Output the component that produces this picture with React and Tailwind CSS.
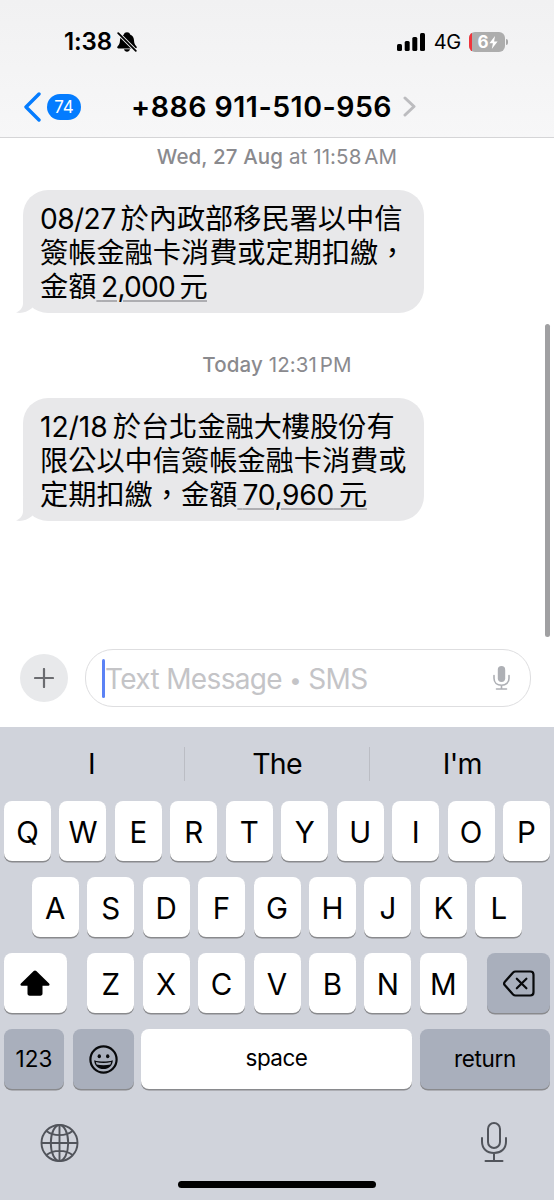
import clsx from 'clsx'

const ROW_ONE = ['Q', 'W', 'E', 'R', 'T', 'Y', 'U', 'I', 'O', 'P']
const ROW_TWO = ['A', 'S', 'D', 'F', 'G', 'H', 'J', 'K', 'L']
const ROW_THREE = ['Z', 'X', 'C', 'V', 'B', 'N', 'M']

const BellOff = () => (
    <svg width="20" height="20" viewBox="0 0 20 20" className="ml-[5px]">
        <path d="M10 0.2c-1.600 0-2.800.9-3.100 2.200C4.300 3.500 3.100 5.500 3 8.200 2.900 11.500 2.100 12.600.9 13.900c-.5.500-.7.900-.7 1.400 0 .7.500 1.100 1.200 1.100h17.200c.7 0 1.200-.4 1.200-1.100 0-.5-.2-.9-.7-1.400-1.200-1.300-2-2.400-2.100-5.700-.1-2.700-1.300-4.700-3.900-5.800C12.800 1.100 11.600.2 10 .2z" fill="#000" />
        <path d="M7 17.200h6c-.3 1.500-1.500 2.500-3 2.500s-2.700-1-3-2.500z" fill="#000" />
        <path d="M1 1l18 18" stroke="#f3f3f4" strokeWidth="3.600" />
        <path d="M1.200 1.200l17.600 17.600" stroke="#000" strokeWidth="1.800" strokeLinecap="round" />
    </svg>
)

const Signal = () => (
    <svg width="28" height="18" viewBox="0 0 28 18">
        <rect x="0" y="11" width="5" height="7" rx="1.500" />
        <rect x="7.700" y="8" width="5" height="10" rx="1.500" />
        <rect x="15.300" y="4" width="5" height="14" rx="1.500" />
        <rect x="23" y="0" width="5" height="18" rx="1.500" />
    </svg>
)

const Battery = () => (
    <div className="flex items-center gap-px">
        <div className="flex h-[20px] w-[36px] overflow-hidden rounded-[6px] bg-[#adadad]">
            <div className="w-[3px] bg-[#f0343c]" />
            <div className="flex flex-1 items-center justify-center pt-px pr-[2px]">
                <span className="text-[17px] leading-none font-bold text-white">6</span>
                <svg width="9" height="13" viewBox="0 0 9 13">
                    <path d="M6 0L.4 7.300h3.500L2.800 13 8.600 5.400H5.100z" fill="#fff" />
                </svg>
            </div>
        </div>
        <div className="h-[6px] w-[2px] rounded-r-full bg-[#a8a8a8]" />
    </div>
)

const StatusBar = () => (
    <div className="flex h-[76px] items-center pt-[7px] pr-[46px] pl-[64px]">
        <span className="text-[24px] leading-none font-semibold tracking-[-0.1px]">1:38</span>
        <BellOff />
        <div className="ml-auto flex items-center">
            <Signal />
            <span className="ml-[9px] mr-[8px] text-[20px] leading-none tracking-[-0.3px]">4G</span>
            <Battery />
        </div>
    </div>
)

const ChatHeader = () => (
    <div className="flex h-[61px] items-center pl-[23px]">
        <svg width="18" height="30" viewBox="0 0 18 30" fill="none">
            <path d="M16 2L3 15l13 13" stroke="#047cff" strokeWidth="3.400" strokeLinecap="round" strokeLinejoin="round" />
        </svg>
        <div className="ml-[6px] flex h-[26px] w-[34px] items-center justify-center rounded-full bg-[#047cff] pt-px text-[17px] leading-none text-white">74</div>
        <h1 className="ml-[50px] w-[262px] pt-[2px] text-[28.500px] leading-none font-semibold tracking-[0.500px] whitespace-nowrap">+886 911-510-956</h1>
        <svg width="13" height="21" viewBox="0 0 13 21" fill="none" className="ml-[10px]">
            <path d="M2 2l9 8.500L2 19" stroke="#bcbcbf" strokeWidth="3" strokeLinecap="round" strokeLinejoin="round" />
        </svg>
    </div>
)

const Stamp = ({ day, time, half }) => (
    <p className="text-center text-[20.5px] leading-[24px] tracking-[0.1px] text-[#8a8a8e]">
        <span className="font-medium">{day}</span> {time} <span className="-ml-[3px]">{half}</span>
    </p>
)

const Bubble = ({ children }) => (
    <div className="relative ml-[23px] h-[123px] w-[401px] rounded-[25px] bg-[#e8e8ea] pt-[12px] pl-[17px] text-[28.2px] leading-[34px] whitespace-nowrap">
        <svg width="34" height="24" viewBox="0 0 34 24" className="absolute bottom-0 -left-[7px]">
            <path d="M7 0v14c0 4-2 7.500-7 9.600 6.500 1 11-.6 15.500-4.100L24 10z" fill="#e8e8ea" />
        </svg>
        <div className="relative">{children}</div>
    </div>
)

const Amount = ({ children, className }) => (
    <span className={clsx('underline decoration-[#aeaeb2] decoration-2 underline-offset-[3px] [word-spacing:-2.500px]', className)}>
        {' '}{children} 元
    </span>
)

const Compose = () => (
    <div className="flex h-[58px] items-center pr-[23px] pl-[20px]">
        <div className="flex size-[48px] items-center justify-center rounded-full bg-[#e8e9eb]">
            <svg width="20" height="20" viewBox="0 0 20 20">
                <path d="M10 1v18M1 10h18" stroke="#6b6c70" strokeWidth="2.200" strokeLinecap="round" />
            </svg>
        </div>
        <div className="ml-[17px] flex h-[58px] flex-1 items-center rounded-[28px] border-[1.5px] border-[#dedee0] bg-white pr-[20px] pl-[16px]">
            <div className="h-[39px] w-[3px] rounded-full bg-[#5b82f5]" />
            <span className="pt-px text-[28px] tracking-[-0.65px] whitespace-nowrap text-[#c4c4c7]">
                Text Message <span className="align-[1px] text-[22px]">•</span> SMS
            </span>
            <svg width="17" height="24" viewBox="0 0 17 24" fill="none" className="ml-auto">
                <rect x="4.800" y="0" width="7.400" height="16" rx="3.700" fill="#aeb0b5" />
                <path d="M1 9.500v2.800c0 4.200 3 7 7.500 7s7.500-2.800 7.500-7V9.500M8.500 19.300V23M3.500 23h10" stroke="#aeb0b5" strokeWidth="1.600" strokeLinecap="round" />
            </svg>
        </div>
    </div>
)

const Key = ({ children, dark, className }) => (
    <div
        className={clsx(
            'flex h-[60px] items-center justify-center rounded-[8px] shadow-[0_1.5px_0_#898a8d]',
            dark ? 'bg-[#a9afbc]' : 'bg-white',
            className
        )}
    >
        {children}
    </div>
)

const Letters = ({ keys }) => (
    <div className="flex gap-[8.45px]">
        {keys.map(letter => (
            <Key key={letter} className="w-[47px] pt-[2px] text-[29.500px]">{letter}</Key>
        ))}
    </div>
)

const Keyboard = () => (
    <div className="h-[473px] bg-[#d0d3db]">
        <div className="flex h-[74px] items-center text-[28.500px] leading-none">
            <span className="flex-1 text-center">I</span>
            <div className="h-[34px] w-[1.5px] bg-[#bbbdc4]" />
            <span className="flex-1 text-center tracking-[-0.8px]">The</span>
            <div className="h-[34px] w-[1.5px] bg-[#bbbdc4]" />
            <span className="flex-1 text-center tracking-[-0.8px]">I'm</span>
        </div>
        <div className="flex flex-col items-center gap-[16px] px-[4px]">
            <Letters keys={ROW_ONE} />
            <Letters keys={ROW_TWO} />
            <div className="flex w-full justify-between">
                <Key className="w-[63px] pr-[1px]">
                    <svg width="30" height="26" viewBox="0 0 30 26">
                        <path d="M13.700 1.100c.8-.8 1.800-.8 2.600 0l12.800 12.400c.9.900.4 2.200-.8 2.200h-5.800v7.800c0 1.400-.8 2.200-2.200 2.200H9.700c-1.400 0-2.200-.8-2.200-2.200v-7.800H1.700c-1.200 0-1.700-1.300-.8-2.200z" />
                    </svg>
                </Key>
                <Letters keys={ROW_THREE} />
                <Key dark className="w-[63px]">
                    <svg width="32" height="27" viewBox="0 0 32 27" fill="none" stroke="#08090b" strokeWidth="2.200" strokeLinecap="round" strokeLinejoin="round">
                        <path d="M12.500 1.500h14.800c2 0 3.200 1.200 3.200 3.200v17.600c0 2-1.200 3.200-3.200 3.200H12.500c-1 0-1.700-.3-2.400-1L1.900 15.300c-1-1.100-1-2.500 0-3.600l8.200-9.200c.7-.7 1.400-1 2.400-1z" />
                        <path d="M13.800 8.700l9.600 9.600M23.400 8.700l-9.600 9.600" />
                    </svg>
                </Key>
            </div>
            <div className="flex w-full text-[22.500px]">
                <Key dark className="w-[60px]">123</Key>
                <Key dark className="ml-[9px] w-[61px] pr-px">
                    <svg width="29" height="29" viewBox="0 0 29 29" fill="none">
                        <circle cx="14.500" cy="14.500" r="13.100" stroke="#08090b" strokeWidth="2.200" />
                        <ellipse cx="10.300" cy="11.300" rx="1.700" ry="2" fill="#08090b" />
                        <ellipse cx="18.700" cy="11.300" rx="1.700" ry="2" fill="#08090b" />
                        <path d="M5.200 15.200c2.800 1 6 1.400 9.300 1.400s6.500-.4 9.300-1.400c-.2 5.300-4.200 8.900-9.300 8.900s-9.100-3.600-9.300-8.900z" fill="#08090b" />
                        <path d="M6.800 17.100c4.900 1.300 10.500 1.300 15.400 0l-.8 2.400c-4.300 1.100-9.500 1.100-13.800 0z" fill="#a9afbc" />
                    </svg>
                </Key>
                <Key className="ml-[7px] w-[271px] pb-[3px] tracking-[-0.5px]">space</Key>
                <Key dark className="ml-[8px] w-[130px] tracking-[-0.3px]">return</Key>
            </div>
        </div>
        <div className="flex justify-between pt-[32px] pr-[46px] pl-[40px]">
            <svg width="39" height="42" viewBox="0 0 39 42" fill="none" stroke="#51545b" strokeWidth="1.900">
                <circle cx="19.500" cy="22" r="18" />
                <ellipse cx="19.500" cy="22" rx="8.700" ry="18" />
                <path d="M19.500 4v36M1.500 22h36M6.500 10c3.500 2.800 8 4.100 13 4.100s9.500-1.300 13-4.100M6.500 34c3.500-2.800 8-4.100 13-4.100s9.500 1.300 13 4.100" />
            </svg>
            <svg width="28" height="42" viewBox="0 0 28 42" fill="none" stroke="#51545b" strokeWidth="2" strokeLinecap="round">
                <rect x="8" y="2" width="12" height="25" rx="6" />
                <path d="M2 17v3.500C2 27.800 7 32 14 32s12-4.200 12-11.500V17M14 32v8M5.500 40h17" />
            </svg>
        </div>
        <div className="mx-auto mt-[18px] h-[7px] w-[198px] rounded-full bg-black" />
    </div>
)

const App = () => {
    return (
        <div className="flex h-[1200px] w-[554px] flex-col overflow-hidden bg-white font-['Inter','Noto_Sans_CJK_TC',sans-serif] text-black">
            <header className="h-[138px] border-b border-[#d5d5d7] bg-linear-to-b from-[#f1f1f2] to-[#f7f7f8]">
                <StatusBar />
                <ChatHeader />
            </header>
            <main className="relative h-[511px] pt-[7px]">
                <Stamp day="Wed, 27 Aug" time="at 11:58" half="AM" />
                <div className="h-[21px]" />
                <Bubble>
                    <p><span className="mr-[5px] tracking-[-0.6px]">08/27</span>於內政部移民署以中信</p>
                    <p>簽帳金融卡消費或定期扣繳，</p>
                    <p>金額<Amount className="tracking-[-0.8px]">2,000</Amount></p>
                </Bubble>
                <div className="h-[40px]" />
                <Stamp day="Today" time="12:31" half="PM" />
                <div className="h-[21px]" />
                <Bubble>
                    <p><span className="mr-[5px]">12/18</span>於台北金融大樓股份有</p>
                    <p>限公以中信簽帳金融卡消費或</p>
                    <p>定期扣繳，金額<Amount className="tracking-[-0.3px]">70,960</Amount></p>
                </Bubble>
                <div className="absolute top-[186px] right-[4px] h-[313px] w-[5px] rounded-full bg-[#a0a0a2]" />
            </main>
            <Compose />
            <div className="h-[20px]" />
            <Keyboard />
        </div>
    )
}

export default App
